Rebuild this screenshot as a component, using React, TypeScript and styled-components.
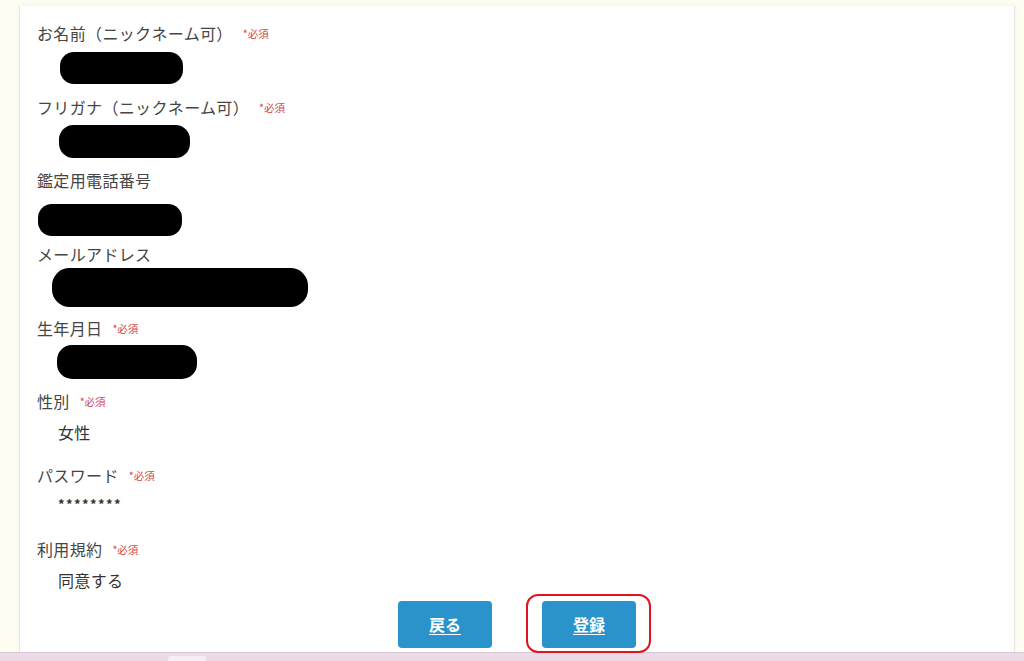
import React from 'react'
import styled, { createGlobalStyle } from 'styled-components';

type Redaction = { x: number; y: number; w: number; h: number };

type FieldProps = {
    label: string;
    required?: boolean;
    redaction?: Redaction;
    value?: string;
    masked?: boolean;
    last?: boolean;
}

const fields: FieldProps[] = [
    { label: 'お名前（ニックネーム可）', required: true, redaction: { x: 23, y: 2, w: 123, h: 32 } },
    { label: 'フリガナ（ニックネーム可）', required: true, redaction: { x: 22, y: 1, w: 131, h: 33 } },
    { label: '鑑定用電話番号', redaction: { x: 1, y: 7, w: 144, h: 32 } },
    { label: 'メールアドレス', redaction: { x: 15, y: -3, w: 256, h: 39 } },
    { label: '生年月日', required: true, redaction: { x: 20, y: 0, w: 140, h: 34 } },
    { label: '性別', required: true, value: '女性' },
    { label: 'パスワード', required: true, value: '********', masked: true },
    { label: '利用規約', required: true, value: '同意する', last: true },
];

const Field: React.FC<FieldProps> = ({ label, required, redaction, value, masked, last }) => {
    return (
        <FieldBlock>
            <FieldLabel>
                {label}
                {required && <Required>*必須</Required>}
            </FieldLabel>
            <FieldValue last={last}>
                {redaction && <Blackout $r={redaction} />}
                {value && <ValueText masked={masked}>{value}</ValueText>}
            </FieldValue>
        </FieldBlock>
    )
}

export default function App() {
    return (
        <>
            <GlobalStyle />
            <Page>
                <Panel>
                    <Form>
                        {fields.map((f) => <Field key={f.label} {...f} />)}
                    </Form>
                    <ButtonRow>
                        <ActionButton>戻る</ActionButton>
                        <Highlight>
                            <ActionButton>登録</ActionButton>
                        </Highlight>
                    </ButtonRow>
                </Panel>
                <BottomBar>
                    <BarTab />
                </BottomBar>
            </Page>
        </>
    )
}

const GlobalStyle = createGlobalStyle`
    html, body {
        margin: 0;
        padding: 0;
        background: #fefdf1;
        font-family: "Noto Sans CJK JP", "Noto Sans", sans-serif;
        overflow: hidden;
    }
`;

const Page = styled.div`
    height: 661px;
    display: flex;
    flex-direction: column;
`;

const Panel = styled.div`
    flex: 1;
    margin: 6px 9px 0 19px;
    background: #fff;
    border-left: 1px solid #e7e6de;
    border-right: 1px solid #e7e6de;
    box-shadow: 0 -2px 4px rgba(0,0,0,.04);
    padding: 10px 0 0 17px;
    display: flex;
    flex-direction: column;
`;

const Form = styled.div`
    display: flex;
    flex-direction: column;
`;

const FieldBlock = styled.div`
    display: flex;
    flex-direction: column;
`;

const FieldLabel = styled.div`
    height: 34px;
    line-height: 34px;
    font-size: 16px;
    letter-spacing: 0.35px;
    color: #454545;
    display: flex;
    align-items: center;
`;

const Required = styled.span`
    margin-left: 10px;
    font-size: 10.5px;
    letter-spacing: 0;
    color: #d1474e;
    position: relative;
    top: 1px;
`;

const FieldValue = styled.div<{ last?: boolean }>`
    height: ${({ last }) => last ? '26px' : '39.7px'};
    padding-left: 21px;
`;

const Blackout = styled.div<{ $r: Redaction }>`
    margin-left: ${({ $r }) => $r.x - 21}px;
    margin-top: ${({ $r }) => $r.y}px;
    width: ${({ $r }) => $r.w}px;
    height: ${({ $r }) => $r.h}px;
    background: #000;
    border-radius: ${({ $r }) => $r.h / 2 - 2}px;
`;

const ValueText = styled.div<{ masked?: boolean }>`
    font-size: ${({ masked }) => masked ? '13px' : '16px'};
    font-weight: ${({ masked }) => masked ? 700 : 400};
    letter-spacing: ${({ masked }) => masked ? '1.4px' : '0.35px'};
    line-height: ${({ masked }) => masked ? '24px' : '29px'};
    color: #333;
`;

const ButtonRow = styled.div`
    display: flex;
    justify-content: center;
    gap: 50px;
    margin-top: 9px;
    padding-right: 17px;
`;

const ActionButton = styled.button`
    width: 94px;
    height: 47px;
    border: none;
    border-radius: 4px;
    background: #2a93cc;
    color: #fff;
    font-family: "Noto Sans CJK JP", sans-serif;
    font-size: 16px;
    font-weight: 700;
    text-decoration: underline;
    text-underline-offset: 3px;
    cursor: pointer;
    padding: 0;
`;

const Highlight = styled.div`
    position: relative;
    &::after {
        content: '';
        position: absolute;
        left: -16px;
        right: -15px;
        top: -7px;
        bottom: -5px;
        border: 2.5px solid #e1141e;
        border-radius: 12px;
        pointer-events: none;
    }
`;

const BottomBar = styled.div`
    height: 8px;
    background: #ecdbe6;
    border-top: 1px solid #d9c9d4;
    padding-left: 168px;
`;

const BarTab = styled.div`
    width: 38px;
    height: 6px;
    margin-top: 3px;
    background: #f6eef4;
    border-radius: 3px 3px 0 0;
`;
